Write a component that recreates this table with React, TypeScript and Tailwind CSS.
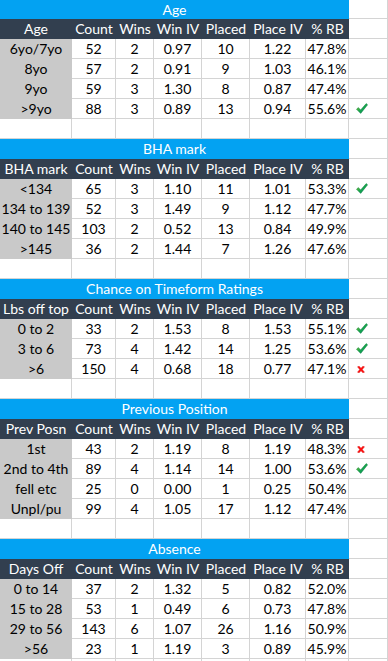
import React from "react";

type Mark = "check" | "cross" | undefined;
type Row = { cells: string[]; mark?: Mark };
type Section = { title: string; header: string; rows: Row[]; blank: boolean };

const sections: Section[] = [
  {
    title: "Age",
    header: "Age",
    blank: true,
    rows: [
      { cells: ["6yo/7yo", "52", "2", "0.97", "10", "1.22", "47.8%"] },
      { cells: ["8yo", "57", "2", "0.91", "9", "1.03", "46.1%"] },
      { cells: ["9yo", "59", "3", "1.30", "8", "0.87", "47.4%"] },
      { cells: [">9yo", "88", "3", "0.89", "13", "0.94", "55.6%"], mark: "check" },
    ],
  },
  {
    title: "BHA mark",
    header: "BHA mark",
    blank: true,
    rows: [
      { cells: ["<134", "65", "3", "1.10", "11", "1.01", "53.3%"], mark: "check" },
      { cells: ["134 to 139", "52", "3", "1.49", "9", "1.12", "47.7%"] },
      { cells: ["140 to 145", "103", "2", "0.52", "13", "0.84", "49.9%"] },
      { cells: [">145", "36", "2", "1.44", "7", "1.26", "47.6%"] },
    ],
  },
  {
    title: "Chance on Timeform Ratings",
    header: "Lbs off top",
    blank: true,
    rows: [
      { cells: ["0 to 2", "33", "2", "1.53", "8", "1.53", "55.1%"], mark: "check" },
      { cells: ["3 to 6", "73", "4", "1.42", "14", "1.25", "53.6%"], mark: "check" },
      { cells: [">6", "150", "4", "0.68", "18", "0.77", "47.1%"], mark: "cross" },
    ],
  },
  {
    title: "Previous Position",
    header: "Prev Posn",
    blank: true,
    rows: [
      { cells: ["1st", "43", "2", "1.19", "8", "1.19", "48.3%"], mark: "cross" },
      { cells: ["2nd to 4th", "89", "4", "1.14", "14", "1.00", "53.6%"], mark: "check" },
      { cells: ["fell etc", "25", "0", "0.00", "1", "0.25", "50.4%"] },
      { cells: ["Unpl/pu", "99", "4", "1.05", "17", "1.12", "47.4%"] },
    ],
  },
  {
    title: "Absence",
    header: "Days Off",
    blank: true,
    rows: [
      { cells: ["0 to 14", "37", "2", "1.32", "5", "0.82", "52.0%"] },
      { cells: ["15 to 28", "53", "1", "0.49", "6", "0.73", "47.8%"] },
      { cells: ["29 to 56", "143", "6", "1.07", "26", "1.16", "50.9%"] },
      { cells: [">56", "23", "1", "1.19", "3", "0.89", "45.9%"] },
    ],
  },
];

const headCols = ["Count", "Wins", "Win IV", "Placed", "Place IV", "% RB"];

function CheckIcon() {
  return (
    <svg width="12" height="11" viewBox="0 0 12 11" className="block">
      <defs>
        <linearGradient id="ck" x1="0" y1="0" x2="1" y2="1">
          <stop offset="0" stopColor="#b6d32a" />
          <stop offset="0.5" stopColor="#16a84c" />
          <stop offset="1" stopColor="#0a8a78" />
        </linearGradient>
      </defs>
      <path d="M0.5 6.2 L2.4 4.6 L4.6 7 L10.2 0.6 L11.6 1.8 L4.7 10.4 Z" fill="url(#ck)" stroke="#0b7a3e" strokeWidth="0.5" strokeLinejoin="round" />
    </svg>
  );
}

function CrossIcon() {
  return (
    <svg width="8" height="7" viewBox="0 0 8 7" className="block">
      <path
        d="M0.5 0.8 L2.2 0.3 L4 2.2 L5.8 0.3 L7.5 0.8 L5.3 3.5 L7.5 6.2 L5.8 6.7 L4 4.8 L2.2 6.7 L0.5 6.2 L2.7 3.5 Z"
        fill="#ff1010"
        stroke="#d40000"
        strokeWidth="0.4"
      />
    </svg>
  );
}

function GridCell({ h, children }: { h: string; children?: React.ReactNode }) {
  return <div className={`${h} border-r border-b border-[#d4d4d4] bg-white`}>{children}</div>;
}

function SectionBlock({ s, first }: { s: Section; first: boolean }) {
  const titleH = first ? "h-[19px] leading-[19px]" : "h-[20px] leading-[20px]";
  return (
    <>
      {/* Title row */}
      <div className={`col-span-7 bg-[#03a2f2] text-white text-center ${titleH}`}>{s.title}</div>
      <div className={`${first ? "h-[19px]" : "h-[20px]"} border-r border-b border-[#d4d4d4] bg-white`} />
      {/* Header row */}
      <div className="h-[20px] leading-[20px] bg-[#323f4f] text-white text-center whitespace-nowrap">{s.header}</div>
      {headCols.map((c) => (
        <div key={c} className="h-[20px] leading-[20px] bg-[#323f4f] text-white text-center whitespace-nowrap">
          {c}
        </div>
      ))}
      <GridCell h="h-[20px]" />
      {/* Data rows */}
      {s.rows.map((r, i) => (
        <React.Fragment key={i}>
          <div className="h-[20px] leading-[20px] bg-[#c9c9c9] text-black text-center whitespace-nowrap">{r.cells[0]}</div>
          {r.cells.slice(1).map((c, j) => (
            <div key={j} className="h-[20px] leading-[20px] border-r border-b border-[#d4d4d4] bg-white text-black text-center whitespace-nowrap">
              {c}
            </div>
          ))}
          <div className="h-[20px] border-r border-b border-[#d4d4d4] bg-white">
            {r.mark === "check" && (
              <div className="pl-[7px] pt-[4px]">
                <CheckIcon />
              </div>
            )}
            {r.mark === "cross" && (
              <div className="pl-[8px] pt-[7px]">
                <CrossIcon />
              </div>
            )}
          </div>
        </React.Fragment>
      ))}
      {s.blank &&
        Array.from({ length: 8 }).map((_, k) => <GridCell key={k} h="h-[20px]" />)}
    </>
  );
}

export default function App() {
  return (
    <div
      className="w-[388px] h-[661px] overflow-hidden bg-white text-[14px] text-black"
      style={{ fontFamily: "Lato, 'Open Sans', sans-serif" }}
    >
      <div className="grid grid-cols-[72px_44px_38px_48px_48px_56px_43px_39px]">
        {sections.map((s, i) => (
          <SectionBlock key={i} s={s} first={i === 0} />
        ))}
      </div>
    </div>
  );
}
